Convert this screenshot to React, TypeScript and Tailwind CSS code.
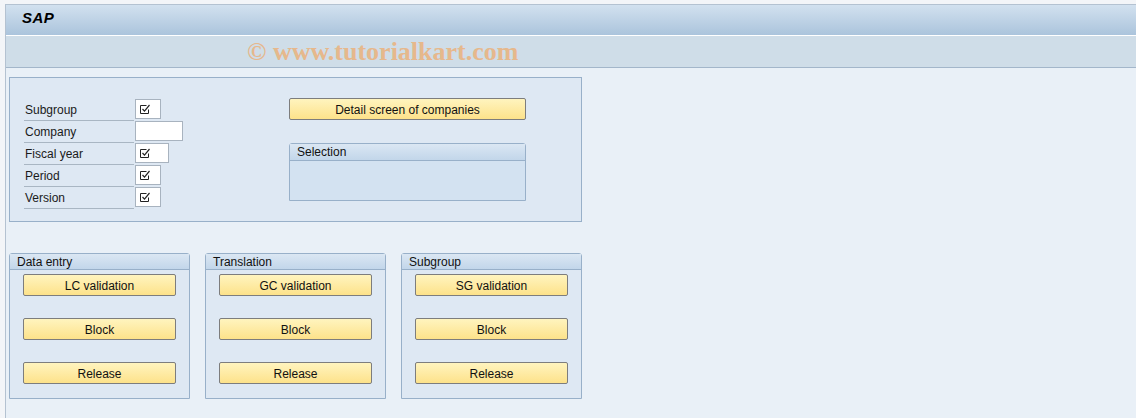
import React from "react";

const font = { fontFamily: '"Liberation Sans", Arial, sans-serif' };

function Check() {
  return (
    <svg width="12" height="12" viewBox="0 0 12 12" className="block">
      <path d="M1.5 2.5h6M1.5 2.5v8h8v-4" fill="none" stroke="#222" strokeWidth="1" />
      <path d="M3.5 6l2 2.2L10.5 2" fill="none" stroke="#222" strokeWidth="1.2" />
    </svg>
  );
}

function Field({ label, width, checked }: { label: string; width: string; checked: boolean }) {
  return (
    <div className="flex items-stretch h-[22px]">
      <div className="w-[110px] border-b border-[#a9b6c3] text-[12px] text-[#1a1a1a] leading-[20px] pl-[1px] pt-[1px]">
        {label}
      </div>
      <div className="ml-[1px] pt-0 pb-[2px]">
        <div className={`${width} h-[20px] bg-white border border-[#a8b3bf] flex items-center pl-[3px]`}>
          {checked && <Check />}
        </div>
      </div>
    </div>
  );
}

function YellowButton({ label, className }: { label: string; className: string }) {
  return (
    <div
      className={`${className} h-[22px] pt-[1px] rounded-[2px] border border-[#7d7d7d] bg-gradient-to-b from-[#fff4be] to-[#fde28a] text-[12px] text-[#111] flex items-center justify-center`}
    >
      {label}
    </div>
  );
}

function ActionGroup({ title, first }: { title: string; first: string }) {
  return (
    <div className="w-[181px] h-[146px] border border-[#98b0c9] rounded-t-[3px] bg-[#dee8f3]">
      <div className="h-[16px] bg-gradient-to-b from-[#dbe7f3] to-[#c2d6ea] border-b border-[#98b0c9] text-[12px] leading-[16px] pl-[7px] text-[#111]">
        {title}
      </div>
      <div className="pl-[13px] pt-[4px] flex flex-col gap-[22px]">
        <YellowButton label={first} className="w-[153px]" />
        <YellowButton label="Block" className="w-[153px]" />
        <YellowButton label="Release" className="w-[153px]" />
      </div>
    </div>
  );
}

export default function App() {
  return (
    <div className="w-[1136px] h-[418px] bg-[#f3f5f8] pt-[4px] pl-[5px] overflow-hidden" style={font}>
      <div className="h-full border-t border-l border-[#b4c2d1] bg-[#e9f0f7]">
        <div className="h-[30px] bg-gradient-to-b from-[#d2e1ef] to-[#abc4dc] flex items-center pl-[16px] pb-[4px]">
          <span className="text-[15px] font-bold italic text-black tracking-[0.5px]">SAP</span>
        </div>
        <div className="h-[1px] bg-white" />
        <div className="h-[32px] bg-[#cfdde8] border-b border-[#a3b6ca] flex items-center pl-[241px]">
          <span
            className="text-[26px] font-bold text-[#e9b483] opacity-90 leading-none"
            style={{ fontFamily: '"Liberation Serif", "Times New Roman", serif' }}
          >
            © www.tutorialkart.com
          </span>
        </div>

        <div className="ml-[3px] mt-[9px] w-[573px] h-[145px] border border-[#98b0c9] bg-[#dee8f3] flex">
          <div className="pl-[14px] pt-[21px]">
            <Field label="Subgroup" width="w-[26px]" checked />
            <Field label="Company" width="w-[48px]" checked={false} />
            <Field label="Fiscal year" width="w-[34px]" checked />
            <Field label="Period" width="w-[26px]" checked />
            <Field label="Version" width="w-[26px]" checked />
          </div>
          <div className="ml-[106px] pt-[20px]">
            <YellowButton label="Detail screen of companies" className="w-[237px]" />
            <div className="mt-[23px] w-[237px] h-[58px] border border-[#98b0c9] rounded-t-[3px] bg-[#d3e2f1]">
              <div className="h-[17px] bg-gradient-to-b from-[#dbe7f3] to-[#c2d6ea] border-b border-[#98b0c9] text-[12px] leading-[17px] pl-[7px] text-[#111]">
                Selection
              </div>
            </div>
          </div>
        </div>

        <div className="ml-[3px] mt-[31px] flex gap-[15px]">
          <ActionGroup title="Data entry" first="LC validation" />
          <ActionGroup title="Translation" first="GC validation" />
          <ActionGroup title="Subgroup" first="SG validation" />
        </div>
      </div>
    </div>
  );
}
